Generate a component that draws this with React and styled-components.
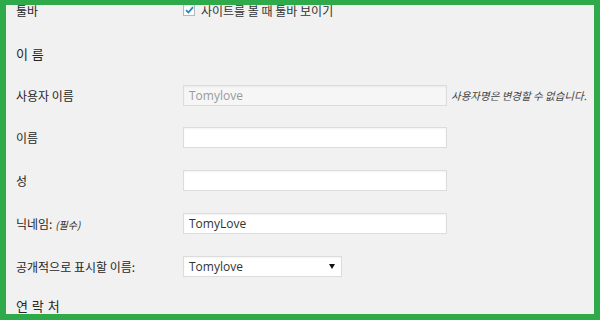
import React from "react";
import styled, { createGlobalStyle } from "styled-components";

const Global = createGlobalStyle`
  html, body { margin: 0; padding: 0; }
  body {
    width: 600px; height: 320px; overflow: hidden;
    background: #2eaa4b;
    font-family: "Noto Sans CJK KR", "Noto Sans", sans-serif;
  }
`;

const Frame = styled.div`
  box-sizing: border-box;
  margin: 5px 6px 0 6px;
  width: 588px;
  height: 309px;
  background: #f1f1f1;
  overflow: hidden;
  padding-left: 10px;
`;

const Rows = styled.div`
  display: flex;
  flex-direction: column;
  margin-top: -18px;
`;

const Row = styled.div`
  display: grid;
  grid-template-columns: 167px auto 1fr;
  align-items: center;
  height: ${(p) => p.h}px;
`;

const Label = styled.div`
  font-size: 12px;
  color: #262626;
  white-space: nowrap;
`;

const Heading = styled.div`
  font-size: 13px;
  color: #262626;
  letter-spacing: 0.5px;
`;

const Req = styled.em`
  font-size: 10px;
  font-style: italic;
`;

const Input = styled.div`
  box-sizing: border-box;
  width: ${(p) => p.w || 264}px;
  height: 21px;
  border: 1px solid #dcdcdc;
  background: ${(p) => (p.disabled ? "#f6f6f6" : "#fff")};
  box-shadow: inset 0 1px 2px rgba(0, 0, 0, 0.05);
  display: flex;
  align-items: center;
  justify-content: space-between;
  padding: 0 6px 0 5px;
  font-family: "Open Sans", "Noto Sans", sans-serif;
  font-size: 12px;
  color: ${(p) => (p.disabled ? "#9a9a9a" : "#333")};
`;

const Arrow = styled.span`
  width: 0;
  height: 0;
  border-left: 3px solid transparent;
  border-right: 3px solid transparent;
  border-top: 5px solid #111;
`;

const Hint = styled.div`
  font-size: 10.5px;
  font-style: italic;
  color: #444;
  padding-left: 4px;
  white-space: nowrap;
`;

const CheckWrap = styled.label`
  display: flex;
  align-items: center;
  gap: 6px;
  font-size: 12px;
  color: #333;
  white-space: nowrap;
  grid-column: 2 / 4;
`;

const Box = styled.span`
  box-sizing: border-box;
  width: 12px;
  height: 12px;
  border: 1px solid #b4b9be;
  background: #fff;
  box-shadow: inset 0 1px 2px rgba(0, 0, 0, 0.1);
  display: flex;
  align-items: center;
  justify-content: center;
`;

export default function App() {
  return (
    <>
      <Global />
      <Frame>
        <Rows>
          <Row h={46}>
            <Label>툴바</Label>
            <CheckWrap>
              <Box>
                <svg width="9" height="8" viewBox="0 0 9 8">
                  <path d="M1 4.2 L3.4 6.5 L8 1.2" fill="none" stroke="#1e8cbe" strokeWidth="1.8" />
                </svg>
              </Box>
              사이트를 볼 때 툴바 보이기
            </CheckWrap>
          </Row>
          <Row h={41}>
            <Heading>이 름</Heading>
          </Row>
          <Row h={42}>
            <Label>사용자 이름</Label>
            <Input disabled>Tomylove</Input>
            <Hint>사용자명은 변경할 수 없습니다.</Hint>
          </Row>
          <Row h={43}>
            <Label>이름</Label>
            <Input />
          </Row>
          <Row h={43}>
            <Label>성</Label>
            <Input />
          </Row>
          <Row h={43}>
            <Label>
              닉네임: <Req>(필수)</Req>
            </Label>
            <Input>TomyLove</Input>
          </Row>
          <Row h={43}>
            <Label>공개적으로 표시할 이름:</Label>
            <Input w={159}>
              Tomylove
              <Arrow />
            </Input>
          </Row>
          <Row h={34}>
            <Heading>연 락 처</Heading>
          </Row>
        </Rows>
      </Frame>
    </>
  );
}
